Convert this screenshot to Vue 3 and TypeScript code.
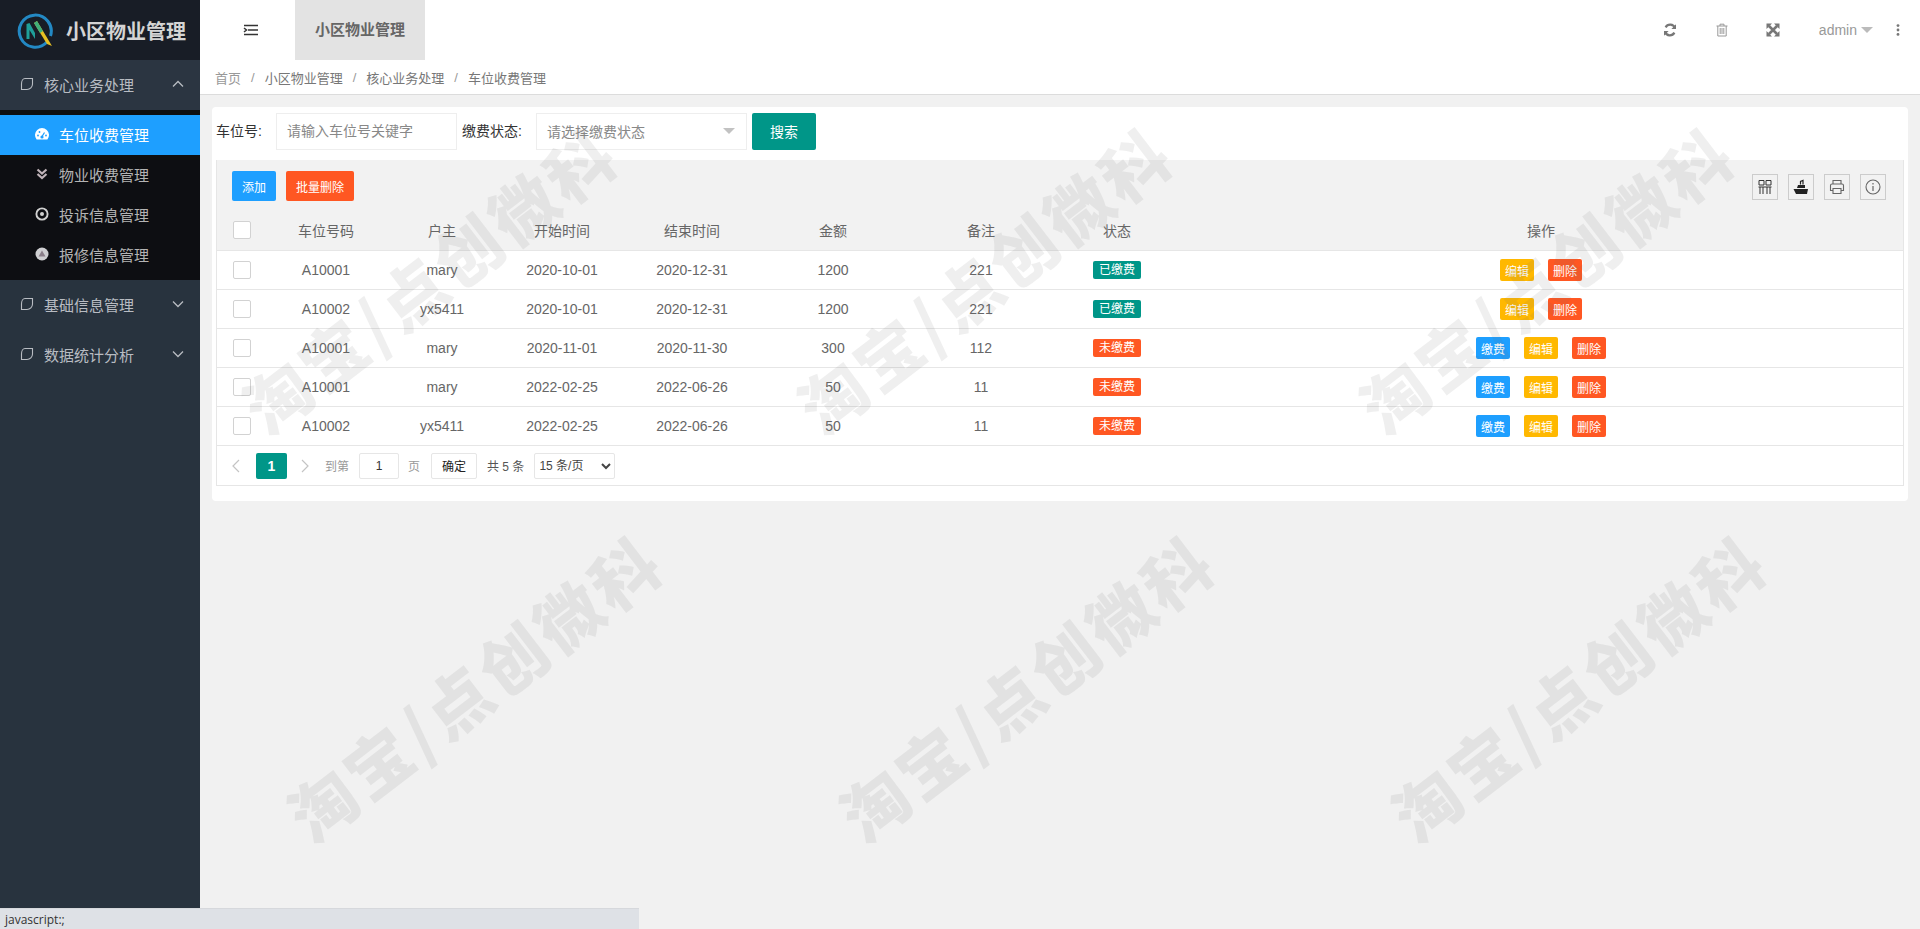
<script setup lang="ts">
interface Row { code: string; owner: string; start: string; end: string; amount: string; note: string; paid: boolean }
const rows: Row[] = [
  { code: 'A10001', owner: 'mary', start: '2020-10-01', end: '2020-12-31', amount: '1200', note: '221', paid: true },
  { code: 'A10002', owner: 'yx5411', start: '2020-10-01', end: '2020-12-31', amount: '1200', note: '221', paid: true },
  { code: 'A10001', owner: 'mary', start: '2020-11-01', end: '2020-11-30', amount: '300', note: '112', paid: false },
  { code: 'A10001', owner: 'mary', start: '2022-02-25', end: '2022-06-26', amount: '50', note: '11', paid: false },
  { code: 'A10002', owner: 'yx5411', start: '2022-02-25', end: '2022-06-26', amount: '50', note: '11', paid: false },
]
const heads = ['车位号码', '户主', '开始时间', '结束时间', '金额', '备注', '状态', '操作']
const crumbs = ['首页', '小区物业管理', '核心业务处理', '车位收费管理']
const marks = [
  { x: 428, y: 278 }, { x: 983, y: 278 }, { x: 1545, y: 278 },
  { x: 473, y: 686 }, { x: 1025, y: 686 }, { x: 1577, y: 686 },
]
</script>

<template>
  <div class="layout">
    <aside class="side">
      <div class="logo">
        <svg class="logo-mark" viewBox="0 0 38 38" width="38" height="38">
          <path d="M31 31 A16 16 0 1 1 34.5 25" fill="none" stroke="#2389c4" stroke-width="3" />
          <path d="M10.5 28 V13 L13.5 12 L19 22 V28 L13.5 19 V28 Z" fill="#1f9f9a" />
          <path d="M18 12 L21 10 L36 35 L31 33 Z" fill="#e6c022" />
          <path d="M18 12 L21 10 L27 20 L24 22 Z" fill="#3fae7a" />
        </svg>
        <span class="logo-text">小区物业管理</span>
      </div>
      <nav class="menu">
        <div class="parent open">
          <svg class="leaf" viewBox="0 0 14 14" width="14" height="14"><path d="M5 1.5 H12.5 V7 C12.5 10 10 12.5 7 12.5 H1.5 V7 C1.5 4 3 1.5 5 1.5 Z" fill="none" stroke="#b8bcc2" stroke-width="1.1" /></svg>
          <span>核心业务处理</span>
          <svg class="chev" viewBox="0 0 12 8" width="12" height="8"><path d="M1 6.5 L6 1.5 L11 6.5" fill="none" stroke="#b8bcc2" stroke-width="1.3" /></svg>
        </div>
        <div class="sub">
          <div class="child active">
            <svg viewBox="0 0 16 16" width="16" height="16"><path d="M2.6 13.5 A7 7 0 1 1 13.4 13.5 Z" fill="#fff" /><circle cx="8" cy="11" r="1.6" fill="#1e9fff" /><path d="M8 10.5 L10.5 6.5" stroke="#1e9fff" stroke-width="1.2" /><circle cx="4" cy="9.5" r=".9" fill="#1e9fff" /><circle cx="5.5" cy="6" r=".9" fill="#1e9fff" /><circle cx="12" cy="9.5" r=".9" fill="#1e9fff" /></svg>
            <span>车位收费管理</span>
          </div>
          <div class="child">
            <svg viewBox="0 0 16 16" width="16" height="16"><path d="M3.5 3.5 L8 7.5 L12.5 3.5 M3.5 8 L8 12 L12.5 8" fill="none" stroke="#c0b4ba" stroke-width="2.2" /></svg>
            <span>物业收费管理</span>
          </div>
          <div class="child">
            <svg viewBox="0 0 16 16" width="16" height="16"><circle cx="8" cy="8" r="5.6" fill="none" stroke="#d0d0d0" stroke-width="1.9" /><circle cx="8" cy="8" r="2" fill="#d0d0d0" /></svg>
            <span>投诉信息管理</span>
          </div>
          <div class="child">
            <svg viewBox="0 0 16 16" width="16" height="16"><circle cx="8" cy="8" r="6.5" fill="#cfcfd2" /><path d="M8 4.5 L11.5 10.5 H4.5 Z" fill="#8b7f8a" /></svg>
            <span>报修信息管理</span>
          </div>
        </div>
        <div class="parent">
          <svg class="leaf" viewBox="0 0 14 14" width="14" height="14"><path d="M5 1.5 H12.5 V7 C12.5 10 10 12.5 7 12.5 H1.5 V7 C1.5 4 3 1.5 5 1.5 Z" fill="none" stroke="#b8bcc2" stroke-width="1.1" /></svg>
          <span>基础信息管理</span>
          <svg class="chev" viewBox="0 0 12 8" width="12" height="8"><path d="M1 1.5 L6 6.5 L11 1.5" fill="none" stroke="#b8bcc2" stroke-width="1.3" /></svg>
        </div>
        <div class="parent">
          <svg class="leaf" viewBox="0 0 14 14" width="14" height="14"><path d="M5 1.5 H12.5 V7 C12.5 10 10 12.5 7 12.5 H1.5 V7 C1.5 4 3 1.5 5 1.5 Z" fill="none" stroke="#b8bcc2" stroke-width="1.1" /></svg>
          <span>数据统计分析</span>
          <svg class="chev" viewBox="0 0 12 8" width="12" height="8"><path d="M1 1.5 L6 6.5 L11 1.5" fill="none" stroke="#b8bcc2" stroke-width="1.3" /></svg>
        </div>
      </nav>
    </aside>

    <div class="main">
      <header class="top">
        <svg class="burger" viewBox="0 0 16 12" width="16" height="12"><path d="M1 1.5 H15 M5 6 H15 M1 10.5 H15 M1 4 L3.5 6 L1 8" fill="none" stroke="#333" stroke-width="1.5" /></svg>
        <div class="tab">小区物业管理</div>
        <div class="top-right">
          <svg class="ti t-refresh" viewBox="0 0 14 14" width="14" height="14"><path d="M12 5 A5.2 5.2 0 0 0 2.6 4.4 M2 9 A5.2 5.2 0 0 0 11.4 9.6" fill="none" stroke="#777" stroke-width="2.2" /><path d="M13 1.2 V6 H8.4 Z M1 12.8 V8 H5.6 Z" fill="#777" /></svg>
          <svg class="ti t-trash" viewBox="0 0 14 14" width="14" height="14"><path d="M1.5 3 H12.5 M5 3 V1.2 H9 V3 M2.8 3 V13 H11.2 V3 M5.2 5 V11 M7 5 V11 M8.8 5 V11" fill="none" stroke="#999" stroke-width="1" /></svg>
          <svg class="ti t-full" viewBox="0 0 14 14" width="14" height="14"><path d="M3 3 L11 11 M11 3 L3 11" stroke="#777" stroke-width="2.6" /><path d="M0.5 0.5 H6 L0.5 6 Z M13.5 0.5 V6 L8 0.5 Z M0.5 13.5 V8 L6 13.5 Z M13.5 13.5 H8 L13.5 8 Z" fill="#777" /></svg>
          <span class="user">admin</span>
          <span class="caret"></span>
          <svg class="ti t-dots" viewBox="0 0 4 12" width="4" height="12"><circle cx="2" cy="1.6" r="1.4" fill="#777" /><circle cx="2" cy="6" r="1.4" fill="#777" /><circle cx="2" cy="10.4" r="1.4" fill="#777" /></svg>
        </div>
      </header>
      <div class="crumbs">
        <template v-for="(c, i) in crumbs" :key="c">
          <span :class="i === 0 ? 'crumb-first' : 'crumb'">{{ c }}</span>
          <span v-if="i < crumbs.length - 1" class="sep">/</span>
        </template>
      </div>

      <main class="content">
        <section class="card">
          <form class="search" @submit.prevent>
            <label class="lab lab1">车位号:</label>
            <input class="inp" placeholder="请输入车位号关键字" />
            <label class="lab lab2">缴费状态:</label>
            <div class="sel"><span>请选择缴费状态</span><i class="sel-caret"></i></div>
            <button class="search-btn">搜索</button>
          </form>

          <div class="grid">
            <div class="toolbar">
              <button class="btn blue">添加</button>
              <button class="btn orange">批量删除</button>
              <div class="tools">
                <span class="tool"><svg viewBox="0 0 16 16" width="16" height="16"><path d="M2 1.5 H7 V6 H2 Z M9 1.5 H14 V6 H9 Z M3 8 V15 M6 8 V15 M10 8 V15 M13 8 V15 M1.5 8 H14.5" fill="none" stroke="#333" stroke-width="1" /></svg></span>
                <span class="tool"><svg viewBox="0 0 16 16" width="16" height="16"><path d="M0.5 10 H15 L14 15 H3 Z" fill="#222" /><path d="M4 9 L5 6 H12 V9 Z" fill="#222" /><path d="M7.5 5.5 V2.5 L10 1.5 V5.5" fill="none" stroke="#222" stroke-width="1.2" /></svg></span>
                <span class="tool"><svg viewBox="0 0 16 16" width="16" height="16"><path d="M4 5 V1.5 H12 V5 M4 11.5 H1.5 V6.5 Q1.5 5 3 5 H13 Q14.5 5 14.5 6.5 V11.5 H12 M4 9.5 H12 V14.5 H4 Z" fill="none" stroke="#666" stroke-width="1.1" /></svg></span>
                <span class="tool"><svg viewBox="0 0 16 16" width="16" height="16"><circle cx="8" cy="8" r="7" fill="none" stroke="#666" stroke-width="1.1" /><path d="M8 4 V5.4 M8 7 V12" stroke="#666" stroke-width="1.2" /></svg></span>
              </div>
            </div>
            <table class="tbl">
              <colgroup>
                <col class="c0" /><col class="c1" /><col class="c2" /><col class="c3" /><col class="c4" /><col class="c5" /><col class="c6" /><col class="c7" /><col />
              </colgroup>
              <thead>
                <tr>
                  <th><span class="check"></span></th>
                  <th v-for="h in heads" :key="h">{{ h }}</th>
                </tr>
              </thead>
              <tbody>
                <tr v-for="(r, i) in rows" :key="i">
                  <td><span class="check"></span></td>
                  <td>{{ r.code }}</td>
                  <td>{{ r.owner }}</td>
                  <td>{{ r.start }}</td>
                  <td>{{ r.end }}</td>
                  <td>{{ r.amount }}</td>
                  <td>{{ r.note }}</td>
                  <td><span class="badge" :class="r.paid ? 'teal' : 'orange'">{{ r.paid ? '已缴费' : '未缴费' }}</span></td>
                  <td class="ops">
                    <button v-if="!r.paid" class="op blue">缴费</button>
                    <button class="op yellow">编辑</button>
                    <button class="op orange">删除</button>
                  </td>
                </tr>
              </tbody>
            </table>
            <div class="pager">
              <svg class="arrow prev" viewBox="0 0 8 14" width="8" height="14"><path d="M7 1 L1 7 L7 13" fill="none" stroke="#c4c4c4" stroke-width="1.2" /></svg>
              <span class="page-on">1</span>
              <svg class="arrow next" viewBox="0 0 8 14" width="8" height="14"><path d="M1 1 L7 7 L1 13" fill="none" stroke="#c4c4c4" stroke-width="1.2" /></svg>
              <span class="muted to">到第</span>
              <input class="page-inp" value="1" />
              <span class="muted pg">页</span>
              <button class="ok">确定</button>
              <span class="total">共 5 条</span>
              <select class="limit"><option>15 条/页</option></select>
            </div>
          </div>
        </section>
      </main>
    </div>

    <div class="marks" aria-hidden="true">
      <span v-for="(m, i) in marks" :key="i" class="mark" :style="{ left: m.x + 'px', top: m.y + 'px' }">淘宝/点创微科</span>
    </div>
    <div class="status">javascript:;</div>
  </div>
</template>

<style>
html, body { margin: 0; padding: 0; overflow: hidden; }
</style>

<style scoped>
.layout {
  position: relative;
  display: flex;
  height: 929px;
  overflow: hidden;
  background: #f1f1f1;
  font-family: "Liberation Sans", "Noto Sans CJK SC", sans-serif;
  font-size: 14px;
  color: #666;
}
.side { width: 200px; flex: none; background: #28333e; color: #b8bcc2; }
.logo { height: 60px; display: flex; align-items: center; padding-left: 16px; box-sizing: border-box; background: #181d26; }
.logo-text { margin-left: 12px; font-size: 20px; font-weight: 700; color: #d4d4d4; }
.parent { height: 50px; box-sizing: border-box; padding-bottom: 2px; display: flex; align-items: center; padding-left: 20px; font-size: 15px; position: relative; }
.parent.open { background: #2b3541; }
.leaf { margin-right: 10px; flex: none; }
.chev { position: absolute; left: 172px; top: 20px; }
.sub { background: #0d0e12; padding-top: 5px; padding-bottom: 5px; }
.child { height: 40px; box-sizing: border-box; padding-bottom: 2px; display: flex; align-items: center; padding-left: 34px; font-size: 15px; color: #b4b4b4; }
.child svg { margin-right: 9px; flex: none; }
.child.active { background: #1e9fff; color: #fff; }

.main { flex: 1; min-width: 0; display: flex; flex-direction: column; }
.top { height: 60px; flex: none; background: #fff; display: flex; align-items: center; }
.burger { margin-left: 43px; }
.tab { margin-left: 36px; width: 130px; height: 60px; line-height: 60px; text-align: center; background: #e3e3e3; font-size: 15px; font-weight: 700; color: #666; }
.top-right { margin-left: auto; display: flex; align-items: center; color: #999; padding-right: 20px; }
.t-refresh { margin-right: 38px; }
.t-trash { margin-right: 37px; }
.t-full { margin-right: 39px; }
.user { font-size: 14px; color: #999; }
.caret { margin-left: 4px; border: 6px solid transparent; border-top-color: #bbb; border-bottom-width: 0; margin-right: 23px; }
.t-dots { display: block; }

.crumbs { height: 35px; box-sizing: border-box; flex: none; background: #fff; display: flex; align-items: center; padding-left: 15px; border-bottom: 1px solid #dcdcdc; font-size: 13px; color: #777; }
.crumb-first { color: #999; }
.sep { margin: 0 10px; color: #999; }

.content { flex: 1; padding: 12px 12px 0; }
.card { background: #fff; border-radius: 4px; box-sizing: border-box; height: 394px; padding: 5px 4px 15px 4px; }
.search { display: flex; align-items: center; height: 37px; margin-top: 1px; }
.lab { color: #333; padding-bottom: 4px; }
.lab1 { width: 60px; flex: none; }
.lab2 { width: 74px; flex: none; margin-left: 5px; }
.inp, .sel { box-sizing: border-box; height: 37px; border: 1px solid #eee; background: #fff; font: inherit; }
.inp { width: 181px; padding: 0 10px 2px; outline: none; }
.inp::placeholder { color: #888; }
.sel { width: 211px; padding: 0 10px 2px; display: flex; align-items: center; justify-content: space-between; color: #888; }
.sel-caret { border: 6px solid transparent; border-top-color: #c2c2c2; border-bottom-width: 0; margin-right: 1px; }
.search-btn { margin-left: 5px; width: 64px; height: 37px; padding: 0 0 2px; border: 0; border-radius: 2px; background: #009688; color: #fff; font: inherit; }

.grid { margin-top: 10px; border: 1px solid #e6e6e6; border-top: 0; }
.toolbar { height: 50px; box-sizing: border-box; background: #f2f2f2; display: flex; align-items: flex-start; padding: 11px 14px 0 15px; }
.btn { height: 30px; padding: 0 10px; border: 0; border-radius: 2px; font: inherit; font-size: 12px; color: #fff; }
.btn.orange { margin-left: 10px; }
.blue { background: #1e9fff; }
.orange { background: #ff5722; }
.yellow { background: #ffb800; }
.teal { background: #009688; }
.tools { margin-left: auto; display: flex; gap: 10px; padding-top: 3px; padding-right: 3px; }
.tool { width: 26px; height: 26px; box-sizing: border-box; border: 1px solid #ccc; display: flex; align-items: center; justify-content: center; }

.tbl { width: 100%; table-layout: fixed; border-collapse: collapse; }
.c0 { width: 50px; } .c1 { width: 118px; } .c2 { width: 114px; } .c3 { width: 126px; } .c4 { width: 134px; } .c5 { width: 148px; } .c6 { width: 148px; } .c7 { width: 124px; }
th, td { padding: 0; text-align: center; border-bottom: 1px solid #e6e6e6; font-weight: 400; color: #666; }
th { height: 40px; background: #f2f2f2; }
td { height: 38px; }
.check { display: block; margin: 0 0 0 16px; width: 18px; height: 18px; box-sizing: border-box; border: 1px solid #d2d2d2; background: #fff; border-radius: 2px; }
.badge { display: inline-block; height: 18px; line-height: 18px; padding: 0 6px; border-radius: 2px; color: #fff; font-size: 12px; vertical-align: middle; }
.ops { font-size: 0; }
.op { width: 34px; height: 22px; padding: 0; border: 0; border-radius: 2px; color: #fff; font: inherit; font-size: 12px; margin-left: 14px; }
.op:first-child { margin-left: 0; }

.pager { height: 39px; display: flex; align-items: center; padding-left: 15px; box-sizing: border-box; font-size: 12px; color: #666; }
.arrow { flex: none; }
.page-on { margin-left: 16px; width: 31px; height: 26px; line-height: 26px; text-align: center; background: #009688; color: #fff; border-radius: 2px; font-weight: 700; font-size: 14px; }
.next { margin-left: 14px; }
.muted { color: #999; }
.to { margin-left: 16px; }
.page-inp { margin-left: 10px; box-sizing: border-box; width: 40px; height: 26px; border: 1px solid #e6e6e6; border-radius: 2px; text-align: center; font: inherit; color: #333; background: #fff; }
.pg { margin-left: 9px; }
.ok { margin-left: 11px; width: 46px; height: 26px; padding: 0; background: #fff; border: 1px solid #e6e6e6; border-radius: 2px; font: inherit; color: #222; }
.total { margin-left: 10px; color: #555; }
.limit { margin-left: 10px; width: 81px; height: 26px; border: 1px solid #e6e6e6; border-radius: 2px; background: #fff; font: inherit; color: #444; }

.marks { position: absolute; inset: 0; pointer-events: none; overflow: hidden; }
.mark {
  position: absolute;
  transform: translate(-50%, -50%) rotate(-37.5deg);
  white-space: nowrap;
  font-family: "Noto Sans CJK SC", sans-serif;
  font-size: 66px;
  font-weight: 900;
  letter-spacing: 4px;
  color: rgba(110, 110, 110, 0.11);
}
.status {
  position: absolute;
  left: 0;
  bottom: 0;
  width: 639px;
  height: 21px;
  line-height: 21px;
  box-sizing: border-box;
  padding-left: 5px;
  background: #dee1e6;
  border-top: 1px solid #d6d8dc;
  font-size: 12px;
  color: #333;
  font-family: "Open Sans", "Liberation Sans", sans-serif;
}
</style>
